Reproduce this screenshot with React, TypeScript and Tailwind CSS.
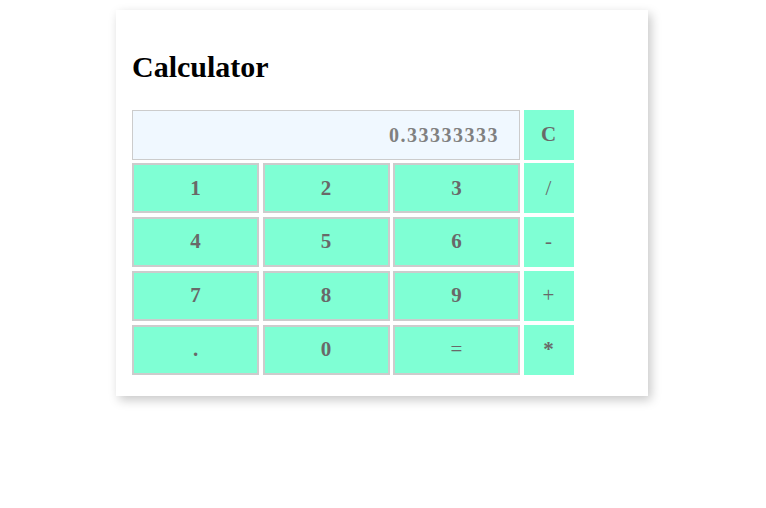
import { useState } from "react";

const keys = [
    ["1", "2", "3", "/"],
    ["4", "5", "6", "-"],
    ["7", "8", "9", "+"],
    [".", "0", "=", "*"],
];

// these glyphs show in the regular cut, the rest are bold
const thin = ["/", "-", "+", "="];

export default function App() {
    const [display, setDisplay] = useState("0.33333333");

    function press(k: string) {
        if (k === "=") {
            try {
                // eslint-disable-next-line no-new-func
                const v = Function(`return (${display})`)();
                setDisplay(String(Math.round(v * 1e8) / 1e8));
            } catch {
                setDisplay("Error");
            }
            return;
        }
        setDisplay(display === "0" ? k : display + k);
    }

    return (
        <div className="min-h-[508px] bg-white pt-[10px] font-['Liberation_Serif',serif]">
            <div className="ml-[116px] w-[532px] bg-white px-4 pt-4 pb-[21px] shadow-[3px_4px_10px_rgba(0,0,0,0.22)]">
                <h2 className="mt-[24px] mb-[25px] text-[30px] font-bold leading-[34.5px] text-black">Calculator</h2>
                <div className="grid grid-cols-[127px_127px_127px_50px] grid-rows-[repeat(5,50px)] gap-x-[3.5px] gap-y-[3.75px]">
                    <div className="col-span-3 flex items-center justify-end border border-[#cccccc] bg-[#f0f8ff] pr-[20px] text-[20px] font-bold tracking-[1.5px] text-[#808080]">
                        {display}
                    </div>
                    <button
                        onClick={() => setDisplay("0")}
                        className="bg-[#7fffd4] text-[21px] font-bold text-[#696969]"
                    >
                        C
                    </button>
                    {keys.map((row) =>
                        row.map((k, i) => (
                            <button
                                key={k}
                                onClick={() => press(k)}
                                className={
                                    (i < 3 ? "border-2 border-[#cccccc] " : "") +
                                    (thin.includes(k) ? "font-normal " : "font-bold ") +
                                    "bg-[#7fffd4] text-[21px] text-[#696969]"
                                }
                            >
                                {k}
                            </button>
                        ))
                    )}
                </div>
            </div>
        </div>
    );
}
